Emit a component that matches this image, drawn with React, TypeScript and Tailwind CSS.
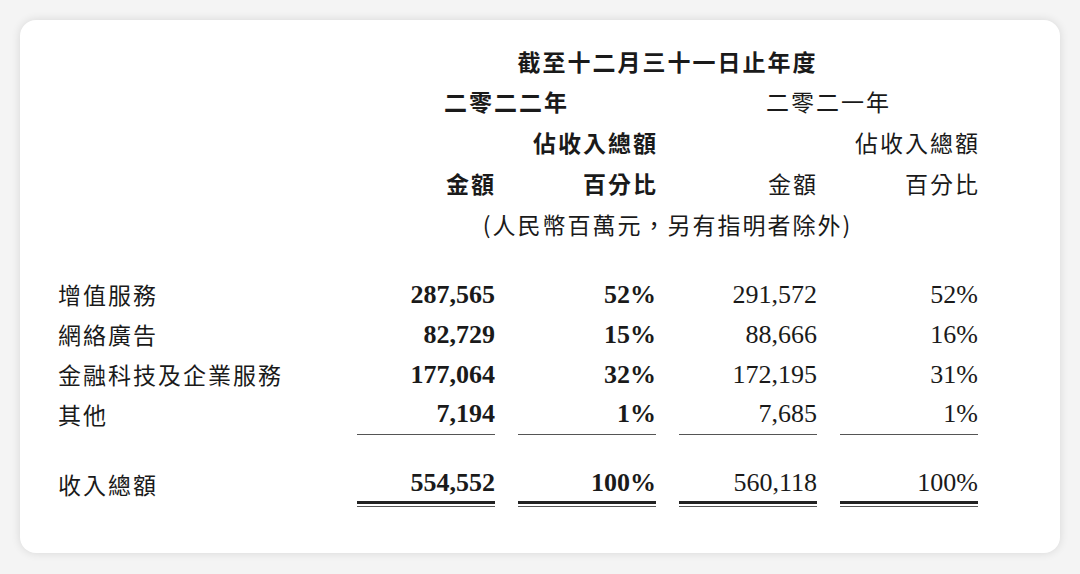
const cjk = "font-['Noto_Sans_CJK_TC','Noto_Sans_CJK_SC',sans-serif] text-[23px] tracking-[2px]";
const num = "font-['Liberation_Serif','Times_New_Roman',serif] text-[26px]";

interface Row { label: string; a: string; ap: string; b: string; bp: string }

const rows: Row[] = [
  { label: "增值服務", a: "287,565", ap: "52%", b: "291,572", bp: "52%" },
  { label: "網絡廣告", a: "82,729", ap: "15%", b: "88,666", bp: "16%" },
  { label: "金融科技及企業服務", a: "177,064", ap: "32%", b: "172,195", bp: "31%" },
  { label: "其他", a: "7,194", ap: "1%", b: "7,685", bp: "1%" },
];

function NumCell({ value, bold, last }: { value: string; bold?: boolean; last?: boolean }) {
  return (
    <div
      className={`h-10 flex items-center justify-end ${num} ${bold ? "font-bold" : ""} ${
        last ? "h-[41px] pb-px border-b-[1.5px] border-[#555]" : ""
      }`}
    >
      {value}
    </div>
  );
}

function TotalCell({ value, bold }: { value: string; bold?: boolean }) {
  return (
    <div>
      <div className={`h-10 flex items-center justify-end border-b-[3px] border-[#222] ${num} ${bold ? "font-bold" : ""}`}>
        {value}
      </div>
      <div className="mt-[2px] border-b border-[#555]" />
    </div>
  );
}

export default function App() {
  return (
    <div className="w-[1080px] h-[574px] bg-[#f4f4f4] p-5">
      <div className="h-[533px] bg-white rounded-2xl shadow-[0_0_10px_rgba(0,0,0,0.12)] pl-[38px] pt-[21px] text-[#1a1a1a]">
        <div className="grid grid-cols-[276px_138px_138px_138px_138px] gap-x-[23px]">
          {/* header */}
          <div />
          <div className={`col-span-4 h-10 flex items-center justify-center font-bold ${cjk}`}>截至十二月三十一日止年度</div>

          <div />
          <div className={`col-span-2 h-10 flex items-center justify-center font-bold ${cjk}`}>二零二二年</div>
          <div className={`col-span-2 h-10 flex items-center justify-center ${cjk}`}>二零二一年</div>

          <div />
          <div />
          <div className={`h-[42px] flex items-center justify-end font-bold ${cjk} -mr-[2px]`}>佔收入總額</div>
          <div />
          <div className={`h-[42px] flex items-center justify-end ${cjk} -mr-[2px]`}>佔收入總額</div>

          <div />
          <div className={`h-10 flex items-center justify-end font-bold ${cjk} tracking-[1px] -mr-[1px]`}>金額</div>
          <div className={`h-10 flex items-center justify-end font-bold ${cjk} -mr-[2px]`}>百分比</div>
          <div className={`h-10 flex items-center justify-end ${cjk} tracking-[1px] -mr-[1px]`}>金額</div>
          <div className={`h-10 flex items-center justify-end ${cjk} -mr-[2px]`}>百分比</div>

          <div />
          <div className={`col-span-4 h-[42px] flex items-center justify-center ${cjk} tracking-[1.5px]`}>
            (人民幣百萬元，另有指明者除外)
          </div>

          {/* spacer */}
          <div className="col-span-5 h-[29px]" />

          {rows.map((r, i) => {
            const last = i === rows.length - 1;
            return (
              <div key={r.label} className="contents">
                <div className={`h-10 flex items-center ${cjk}`}>{r.label}</div>
                <NumCell value={r.a} bold last={last} />
                <NumCell value={r.ap} bold last={last} />
                <NumCell value={r.b} last={last} />
                <NumCell value={r.bp} last={last} />
              </div>
            );
          })}

          <div className="col-span-5 h-[29px]" />

          <div className={`h-10 flex items-center ${cjk}`}>收入總額</div>
          <TotalCell value="554,552" bold />
          <TotalCell value="100%" bold />
          <TotalCell value="560,118" />
          <TotalCell value="100%" />
        </div>
      </div>
    </div>
  );
}
